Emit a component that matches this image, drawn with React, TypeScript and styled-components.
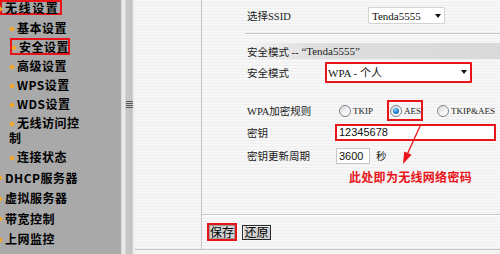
import { createGlobalStyle, css, styled } from "styled-components";

const GlobalStyle = createGlobalStyle`
  html, body {
    margin: 0;
    padding: 0;
  }
  body {
    width: 500px;
    height: 254px;
    overflow: hidden;
    background: #f2f2f2;
    font-family: "Noto Sans CJK SC", sans-serif;
  }
  * {
    box-sizing: border-box;
  }
`;

const RED = "#e8141a";

const stripes = css`
  background: repeating-linear-gradient(
    to bottom,
    #f7f7f7 0,
    #f7f7f7 2px,
    #efefef 2px,
    #efefef 3px
  );
`;

const Page = styled.div`
  position: relative;
  display: flex;
  width: 500px;
  height: 254px;
  overflow: hidden;
`;

/* ---------- left menu ---------- */

const Sidebar = styled.nav`
  width: 121px;
  flex-shrink: 0;
  display: flex;
  flex-direction: column;
  background: #a9a9a9;
  color: #000;
  font-family: "Noto Sans CJK SC", sans-serif;
  font-size: 12px;
  font-weight: 700;
  line-height: 15px;
  letter-spacing: 0.5px;
`;

const Bullet = styled.i<{ $top?: boolean }>`
  display: inline-block;
  width: 4px;
  height: 4px;
  background: #f5a623;
  transform: rotate(45deg);
  vertical-align: middle;
  margin: -2px 3px 0 ${(p) => (p.$top ? -2 : 1)}px;
`;

const TopItem = styled.div<{ $boxed?: boolean }>`
  height: 15px;
  margin-top: 5.5px;
  white-space: nowrap;
  ${(p) =>
    p.$boxed &&
    css`
      width: 62px;
      margin-top: 0;
      letter-spacing: 1.6px;
      box-shadow: inset 0 0 0 2px ${RED};
    `}
`;

const SubList = styled.div`
  display: flex;
  flex-direction: column;
  gap: 4px;
  margin-top: 5px;
`;

const SubItem = styled.div<{ $boxed?: boolean }>`
  width: 84px;
  padding-left: 9px;
  ${(p) =>
    p.$boxed &&
    css`
      width: 60px;
      margin: -1px 0 -1px 10px;
      padding: 1px 0 1px 1px;
      box-shadow: inset 0 0 0 2px ${RED};
    `}
`;

/* ---------- splitter ---------- */

const Splitter = styled.div`
  width: 14px;
  flex-shrink: 0;
  padding: 101px 0 0 5px;
  background: linear-gradient(
    to right,
    #d6d6d6 0,
    #ececec 2px,
    #e4e4e4 4px,
    #c8c8c8 5px,
    #c2c2c2 11px,
    #e6e6e6 12px,
    #f4f4f4 14px
  );
`;

const Grip = styled.div`
  width: 7px;
  height: 8px;
  background: repeating-linear-gradient(
    to bottom,
    #555 0,
    #555 1px,
    transparent 1px,
    transparent 2px
  );
`;

/* ---------- work area ---------- */

const Workspace = styled.div`
  flex: 1;
  display: flex;
  flex-direction: column;
  background: #f3f3f3;
`;

const Frame = styled.div`
  height: 250px;
  display: flex;
  border-bottom: 1px solid #c6c6c6;
`;

const Gutter = styled.div`
  width: 66px;
  flex-shrink: 0;
  ${stripes}
`;

const Panel = styled.section`
  flex: 1;
  display: flex;
  flex-direction: column;
  border-left: 1px solid #c4c4c4;
  ${stripes}
`;

const Form = styled.div`
  height: 214px;
  flex-shrink: 0;
  display: flex;
  flex-direction: column;
  padding-left: 43px;
  color: #1a1a1a;
  font-family: "Liberation Serif", "Noto Sans CJK SC", serif;
  font-size: 10.5px;
`;

const Row = styled.div<{ $h: number; $mt?: number }>`
  display: flex;
  align-items: center;
  height: ${(p) => p.$h}px;
  margin-top: ${(p) => p.$mt ?? 0}px;
  flex-shrink: 0;
`;

const Label = styled.span`
  width: 80px;
  flex-shrink: 0;
  padding-left: 2px;
  white-space: nowrap;
`;

const Field = styled.div<{ $indent: number }>`
  display: flex;
  align-items: center;
  margin-left: ${(p) => p.$indent}px;
`;

const Divider = styled.div`
  height: 2px;
  margin-top: 2px;
  flex-shrink: 0;
  border-top: 1px solid #c2c2c2;
  border-bottom: 1px solid #ffffff;
`;

const Band = styled.div`
  height: 16px;
  margin-top: 8px;
  flex-shrink: 0;
  display: flex;
  align-items: center;
  padding-left: 2px;
  white-space: nowrap;
  background: linear-gradient(to right, #f3f3f3 0, #dedede 28%, #d9d9d9 100%);
`;

const Quoted = styled.span`
  font-family: "Liberation Serif", serif;
  font-size: 11px;
`;

const DropBox = styled.div<{ $w: number; $h: number; $boxed?: boolean }>`
  width: ${(p) => p.$w}px;
  height: ${(p) => p.$h}px;
  display: flex;
  align-items: center;
  justify-content: space-between;
  padding: 0 3px 0 ${(p) => (p.$boxed ? 1 : 3)}px;
  background: #fff;
  border: ${(p) => (p.$boxed ? `2px solid ${RED}` : "1px solid #d2d2d2")};
  border-radius: 1px;
  font-family: "Liberation Serif", "Noto Sans CJK SC", serif;
  font-size: 11px;
  color: #111;
  white-space: nowrap;
`;

const Caret = styled.span`
  width: 0;
  height: 0;
  border-left: 3.5px solid transparent;
  border-right: 3.5px solid transparent;
  border-top: 4px solid #111;
`;

const RadioGroup = styled.div`
  display: flex;
  align-items: center;
  gap: 14px;
  margin-left: 14px;
  font-size: 9px;
  white-space: nowrap;
`;

const Option = styled.label<{ $boxed?: boolean }>`
  display: inline-flex;
  align-items: center;
  gap: 2px;
  height: 21px;
  ${(p) =>
    p.$boxed &&
    css`
      padding: 0 2px 0 3px;
      box-shadow: inset 0 0 0 2px ${RED};
    `}
`;

const Radio = styled.span<{ $on?: boolean }>`
  width: 12px;
  height: 12px;
  flex-shrink: 0;
  display: inline-flex;
  align-items: center;
  justify-content: center;
  border-radius: 50%;
  border: 1px solid #7d8790;
  background: linear-gradient(135deg, #d6d6d6 0%, #f4f4f4 55%, #ffffff 100%);

  &::after {
    content: "";
    display: ${(p) => (p.$on ? "block" : "none")};
    width: 6px;
    height: 6px;
    border-radius: 50%;
    background: radial-gradient(circle at 40% 35%, #8fdcff 0, #2a86d8 45%, #0d4f9e 100%);
  }
`;

const TextBox = styled.div<{ $w: number; $h: number; $boxed?: boolean }>`
  width: ${(p) => p.$w}px;
  height: ${(p) => p.$h}px;
  display: flex;
  align-items: center;
  padding-left: 2px;
  background: #fff;
  border: ${(p) => (p.$boxed ? `2px solid ${RED}` : "1px solid #c6c6c6")};
  font-family: "Liberation Sans", sans-serif;
  font-size: 11px;
  color: #111;
`;

const Unit = styled.span`
  margin-left: 6px;
  font-family: "Noto Sans CJK SC", sans-serif;
`;

const Note = styled.div`
  height: 14px;
  line-height: 14px;
  margin-left: 104px;
  flex-shrink: 0;
  color: ${RED};
  font-family: "Noto Sans CJK SC", sans-serif;
  font-size: 12px;
  font-weight: 700;
  letter-spacing: 0.3px;
  white-space: nowrap;
`;

const ButtonBar = styled.div`
  flex: 1;
  padding: 8px 0 0 5px;
  border-top: 1px solid #c8c8c8;
  box-shadow: inset 0 1px #ffffff;
`;

const ButtonRow = styled.div`
  display: flex;
  align-items: center;
  gap: 5px;
`;

const Button = styled.button<{ $primary?: boolean }>`
  margin: 0;
  padding: 0;
  width: ${(p) => (p.$primary ? 30 : 29)}px;
  height: ${(p) => (p.$primary ? 18 : 15)}px;
  display: flex;
  align-items: center;
  justify-content: center;
  font-family: "Noto Sans CJK SC", sans-serif;
  font-size: 12px;
  line-height: 1;
  color: #000;
  background: #d2d2d2;
  border: ${(p) => (p.$primary ? `2px solid ${RED}` : "1px solid #2a2a2a")};
  box-shadow: ${(p) => (p.$primary ? "inset 0 0 0 1px #9a9a9a" : "inset 1px 1px #f4f4f4")};
`;

const Overlay = styled.svg`
  position: absolute;
  left: 0;
  top: 0;
  pointer-events: none;
`;

export default function App() {
  return (
    <>
      <GlobalStyle />
      <Page>
        <Sidebar>
          <TopItem $boxed>
            <Bullet $top />
            无线设置
          </TopItem>
          <SubList>
            <SubItem>
              <Bullet />
              基本设置
            </SubItem>
            <SubItem $boxed>
              <Bullet />
              安全设置
            </SubItem>
            <SubItem>
              <Bullet />
              高级设置
            </SubItem>
            <SubItem>
              <Bullet />
              WPS设置
            </SubItem>
            <SubItem>
              <Bullet />
              WDS设置
            </SubItem>
            <SubItem>
              <Bullet />
              无线访问控制
            </SubItem>
            <SubItem>
              <Bullet />
              连接状态
            </SubItem>
          </SubList>
          <TopItem>
            <Bullet $top />
            DHCP服务器
          </TopItem>
          <TopItem>
            <Bullet $top />
            虚拟服务器
          </TopItem>
          <TopItem>
            <Bullet $top />
            带宽控制
          </TopItem>
          <TopItem>
            <Bullet $top />
            上网监控
          </TopItem>
        </Sidebar>

        <Splitter>
          <Grip />
        </Splitter>

        <Workspace>
          <Frame>
            <Gutter />
            <Panel>
              <Form>
                <Row $h={31}>
                  <Label>选择SSID</Label>
                  <Field $indent={43}>
                    <DropBox $w={77} $h={17}>
                      Tenda5555
                      <Caret />
                    </DropBox>
                  </Field>
                </Row>
                <Divider />
                <Band>
                  安全模式 -- <Quoted>&nbsp;“Tenda5555”</Quoted>
                </Band>
                <Row $h={26}>
                  <Label>安全模式</Label>
                  <Field $indent={0}>
                    <DropBox $w={147} $h={21} $boxed>
                      WPA - 个人
                      <Caret />
                    </DropBox>
                  </Field>
                </Row>
                <Row $h={25} $mt={13}>
                  <Label>WPA加密规则</Label>
                  <RadioGroup>
                    <Option>
                      <Radio />
                      TKIP
                    </Option>
                    <Option $boxed>
                      <Radio $on />
                      AES
                    </Option>
                    <Option>
                      <Radio />
                      TKIP&amp;AES
                    </Option>
                  </RadioGroup>
                </Row>
                <Row $h={18}>
                  <Label>密钥</Label>
                  <Field $indent={10}>
                    <TextBox $w={161} $h={17} $boxed>
                      12345678
                    </TextBox>
                  </Field>
                </Row>
                <Row $h={29}>
                  <Label>密钥更新周期</Label>
                  <Field $indent={11}>
                    <TextBox $w={34} $h={16}>
                      3600
                    </TextBox>
                    <Unit>秒</Unit>
                  </Field>
                </Row>
                <Note>此处即为无线网络密码</Note>
              </Form>
              <ButtonBar>
                <ButtonRow>
                  <Button $primary>保存</Button>
                  <Button>还原</Button>
                </ButtonRow>
              </ButtonBar>
            </Panel>
          </Frame>
        </Workspace>

        <Overlay width="500" height="254" viewBox="0 0 500 254">
          <line x1="421" y1="124" x2="407.6" y2="153.6" stroke={RED} strokeWidth="1.3" />
          <polygon points="403,164 411.6,154.8 404.2,151.4" fill={RED} />
        </Overlay>
      </Page>
    </>
  );
}
